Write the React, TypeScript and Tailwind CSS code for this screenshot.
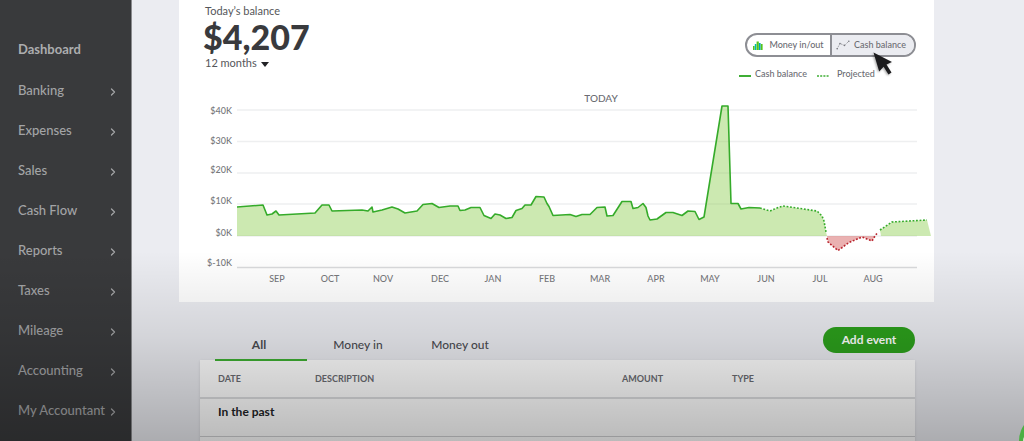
import { ChevronRight } from "lucide-react";

type Point = [number, number];

const navItems = [
  "Banking",
  "Expenses",
  "Sales",
  "Cash Flow",
  "Reports",
  "Taxes",
  "Mileage",
  "Accounting",
  "My Accountant",
];

const tabs = ["All", "Money in", "Money out"];

const ZERO = 146;

const actual: Point[] = [
  [58, 117], [84, 115], [88, 125], [93, 124], [97, 121], [100, 125], [136, 123], [143, 115],
  [150, 115], [153, 121], [183, 120], [189, 121], [193, 117], [194, 122], [203, 120], [213, 117],
  [219, 119], [226, 123], [238, 121], [244, 114.5], [253, 113.5], [260, 117.5], [271, 116],
  [279, 116], [281, 120.5], [286, 120], [292, 117.5], [301, 117.5], [305, 125.5], [312, 128.5],
  [316, 124], [321, 125], [327, 128.5], [333, 127.5], [337, 120.5], [343, 118.5], [346, 115],
  [352, 115], [357, 106.5], [365, 107], [368, 113.5], [370, 116.5], [374, 125.5], [391, 124.5],
  [397, 126.5], [403, 124.5], [411, 124.5], [418, 117.5], [426, 117], [428, 126], [434, 125.5],
  [443, 111.5], [452, 111.5], [454, 118.5], [459, 117.5], [464, 113.5], [467, 117.5], [469, 126],
  [471, 130], [478, 129], [487, 122.5], [494, 122.5], [503, 125.5], [509, 121], [516, 121.5],
  [520, 129.5], [525, 127], [543, 16], [549, 16], [552, 113.5], [559, 113.5], [562, 119],
  [570, 117.5], [581, 118],
];

const projected: Point[] = [
  [581, 118], [591, 121], [598, 118], [604, 116], [621, 118.5], [638, 121], [643, 126],
  [645, 131], [647, 142],
];

const overdrawn: Point[] = [
  [648, 148], [649, 152], [659, 160.5], [670, 152.5], [683, 147], [693, 151], [696, 146], [699, 142],
];

const recovered: Point[] = [[701, 140], [713, 132], [748, 130]];

const yTicks = [
  { label: "$40K", line: 20, text: 24 },
  { label: "$30K", line: 51.5, text: 54 },
  { label: "$20K", line: 83, text: 83 },
  { label: "$10K", line: 114, text: 114 },
  { label: "$0K", line: 146, text: 146 },
  { label: "$-10K", line: 177.5, text: 176 },
];

const months = [
  { label: "SEP", x: 98 },
  { label: "OCT", x: 151 },
  { label: "NOV", x: 204 },
  { label: "DEC", x: 261 },
  { label: "JAN", x: 314 },
  { label: "FEB", x: 368 },
  { label: "MAR", x: 421 },
  { label: "APR", x: 477 },
  { label: "MAY", x: 531 },
  { label: "JUN", x: 587 },
  { label: "JUL", x: 641 },
  { label: "AUG", x: 694 },
];

const toPoints = (points: Point[]) => points.map(([x, y]) => `${x},${y}`).join(" ");

function Sidebar() {
  return (
    <nav
      aria-label="Main"
      className="w-[132px] shrink-0 border-r border-[#8a8b8e] bg-[#393a3c] pt-[30px] text-[13px] font-medium text-[#a3a4a6]"
    >
      <a
        href="#dashboard"
        className="mb-px flex h-10 items-center pl-[18px] font-bold text-[#acadaf]"
      >
        Dashboard
      </a>
      <ul>
        {navItems.map((item) => (
          <li key={item}>
            <a
              href={`#${item}`}
              className="flex h-10 items-center justify-between pr-3 pl-[18px] whitespace-nowrap"
            >
              {item}
              <ChevronRight className="mt-0.5 size-3 shrink-0" strokeWidth={2.6} />
            </a>
          </li>
        ))}
      </ul>
    </nav>
  );
}

function BarsIcon() {
  return (
    <svg viewBox="0 0 10 9" className="h-[9px] w-2.5 shrink-0" aria-hidden="true">
      <rect x="0" y="5" width="1.6" height="4" fill="#53c41a" />
      <rect x="1.8" y="3" width="1.6" height="6" fill="#00b8b0" />
      <rect x="3.6" y="0.5" width="2.2" height="8.5" fill="#53c41a" />
      <rect x="6" y="2" width="1.6" height="7" fill="#00a6b5" />
      <rect x="7.8" y="3" width="1.8" height="6" fill="#53c41a" />
    </svg>
  );
}

function TrendIcon() {
  return (
    <svg viewBox="0 0 14 10" className="h-2.5 w-3.5 shrink-0" aria-hidden="true">
      <path
        d="M1 9 L4 3.5 L8.5 5.5 L13 1"
        fill="none"
        stroke="#8d8e94"
        strokeWidth="0.9"
        strokeDasharray="1.4 1.1"
      />
      <circle cx="1.2" cy="8.8" r="0.8" fill="#77787e" />
      <circle cx="4" cy="3.6" r="0.8" fill="#77787e" />
      <circle cx="8.5" cy="5.4" r="0.8" fill="#77787e" />
      <circle cx="12.8" cy="1.2" r="0.8" fill="#77787e" />
    </svg>
  );
}

function Pointer() {
  return (
    <svg
      viewBox="0 0 22 26"
      className="pointer-events-none absolute top-4 left-10 h-[26px] w-[22px] drop-shadow-[-1px_1px_1px_rgba(0,0,0,0.35)]"
      aria-hidden="true"
    >
      <path d="M1.5 1.5 L20 11 L14.5 13.6 L19.5 21.5 L16.5 23.5 L11.6 15.8 L7.2 20.5 Z" fill="#1c1c1e" />
    </svg>
  );
}

function BalanceChart() {
  const positive = `58,${ZERO} ${toPoints(actual)} ${toPoints(projected)} 648,${ZERO}`;
  const negative = `648,${ZERO} ${toPoints(overdrawn.slice(1, -1))}`;
  const recovery = `702,${ZERO} ${toPoints(recovered)} 752,${ZERO}`;
  return (
    <svg viewBox="0 0 755 212" className="block h-auto w-full" role="img" aria-label="Cash balance over 12 months">
      {yTicks.map((t) => (
        <g key={t.label}>
          <line
            x1="58"
            x2="738"
            y1={t.line}
            y2={t.line}
            stroke={t.label === "$-10K" ? "#d9dadc" : "#eeeff0"}
            strokeWidth="1.4"
          />
          <text x="53" y={t.text} textAnchor="end" className="fill-[#77787c] text-[9px] font-medium">
            {t.label}
          </text>
        </g>
      ))}
      <polygon points={positive} fill="#8fd054" fillOpacity="0.46" />
      <polygon points={negative} fill="#d35b5b" fillOpacity="0.48" />
      <polygon points={recovery} fill="#8fd054" fillOpacity="0.46" />
      <g fill="none" strokeWidth="1.6" strokeLinejoin="round">
        <polyline points={toPoints(actual)} stroke="#35ab2a" />
        <polyline points={toPoints(projected)} stroke="#35ab2a" strokeDasharray="1.8 1.7" />
        <polyline points={toPoints(overdrawn)} stroke="#b8222c" strokeDasharray="1.8 1.7" />
        <polyline points={toPoints(recovered)} stroke="#35ab2a" strokeDasharray="1.8 1.7" />
      </g>
      <text x="422" y="12" textAnchor="middle" className="fill-[#6b6c72] text-[10px] font-medium">
        TODAY
      </text>
      {months.map((m) => (
        <text
          key={m.label}
          x={m.x}
          y="192"
          textAnchor="middle"
          className="fill-[#77787c] text-[9px] font-medium"
        >
          {m.label}
        </text>
      ))}
    </svg>
  );
}

function BalanceCard() {
  return (
    <section className="bg-white">
      <div className="flex h-[90px] justify-between pr-[18px] pl-[26px]">
        <div>
          <h2 className="pt-[3px] text-[11px] leading-4 text-[#55565a]">Today’s balance</h2>
          <p className="-ml-0.5 text-[34px] leading-9 font-black text-[#393a3d]">$4,207</p>
          <div className="relative w-[66px]">
            <select
              aria-label="Period"
              className="block w-full appearance-none bg-transparent text-[11px] leading-4 text-[#55565a]"
            >
              <option>12 months</option>
            </select>
            <svg
              viewBox="0 0 8 5"
              className="pointer-events-none absolute top-[7px] right-0.5 h-[5px] w-2"
              aria-hidden="true"
            >
              <path d="M0 0 H8 L4 5 Z" fill="#222326" />
            </svg>
          </div>
        </div>
        <div className="pt-[33px] text-[9px] font-medium text-[#6b6c72]">
          <div className="flex h-6 rounded-full border-2 border-[#8d8e94]">
            <button
              type="button"
              className="flex w-[83px] items-center justify-center gap-1.5 rounded-l-full whitespace-nowrap"
            >
              <BarsIcon />
              Money in/out
            </button>
            <button
              type="button"
              aria-pressed="true"
              className="relative flex w-[84px] items-center justify-center gap-1 rounded-r-full border-l-2 border-[#8d8e94] bg-[#ebecf1] pr-1 whitespace-nowrap"
            >
              <TrendIcon />
              Cash balance
              <Pointer />
            </button>
          </div>
          <ul className="-ml-1.5 flex items-center pt-[9px] leading-4">
            <li className="flex items-center gap-1">
              <span className="mt-1 w-3 border-t-2 border-[#3fae35]" />
              Cash balance
            </li>
            <li className="ml-2.5 flex items-center gap-2">
              <svg viewBox="0 0 12 2" className="mt-1 h-0.5 w-3" aria-hidden="true">
                <line x1="0" x2="12" y1="1" y2="1" stroke="#3fae35" strokeWidth="1.6" strokeDasharray="2 1.2" />
              </svg>
              Projected
            </li>
          </ul>
        </div>
      </div>
      <BalanceChart />
    </section>
  );
}

function Events() {
  return (
    <section className="mr-[19px] ml-[21px] pt-[25px]">
      <div className="flex h-[33px] justify-between pl-[15px]">
        <div role="tablist" className="flex text-[12px] font-medium text-[#4b4c51]">
          {tabs.map((tab, i) => (
            <button
              key={tab}
              type="button"
              role="tab"
              aria-selected={i === 0}
              className={
                i === 0
                  ? "relative z-10 -mb-px w-[92px] border-b-2 border-[#3fb033] pt-1 pr-1 font-bold"
                  : "-mb-px w-[102px] border-b-2 border-transparent pt-1"
              }
            >
              {tab}
            </button>
          ))}
        </div>
        <button
          type="button"
          className="h-[26px] w-[92px] rounded-full bg-[#2ca01c] text-[12px] font-bold text-white"
        >
          Add event
        </button>
      </div>
      <table className="w-full table-fixed border-collapse bg-white text-left shadow-sm">
        <thead>
          <tr className="h-[38px] border-b-2 border-[#dcdddf] text-[9px] text-[#6b6c72]">
            <th className="w-[97px] pl-[18px] font-bold">DATE</th>
            <th className="pl-[18px] font-bold">DESCRIPTION</th>
            <th className="w-[110px] pl-[18px] font-bold">AMOUNT</th>
            <th className="w-[201px] pl-[18px] font-bold">TYPE</th>
          </tr>
        </thead>
        <tbody className="text-[12px] text-[#222326]">
          <tr className="h-[38px] border-b border-[#cfd0d2]">
            <th colSpan={4} scope="colgroup" className="pb-2.5 pl-[18px] font-bold">
              In the past
            </th>
          </tr>
          <tr className="h-[38px]">
            <td colSpan={4} />
          </tr>
        </tbody>
      </table>
    </section>
  );
}

export default function App() {
  return (
    <div className="relative flex h-screen overflow-hidden bg-[#ebecf1] font-['Lato','Open_Sans',sans-serif]">
      <Sidebar />
      <main className="min-w-0 flex-1 pr-[90px] pl-[47px]">
        <BalanceCard />
        <Events />
      </main>
      <div className="pointer-events-none absolute inset-x-0 bottom-0 z-20 h-[190px] bg-linear-to-b from-black/0 via-black/10 via-45% to-black/27" />
      <button
        type="button"
        aria-label="Help"
        className="absolute -right-[51px] -bottom-7 z-30 flex size-14 items-center rounded-full bg-[#4caf43] pl-1"
      >
        <span className="size-4 rounded-full border-2 border-[#d5ecd2]" />
      </button>
    </div>
  );
}
